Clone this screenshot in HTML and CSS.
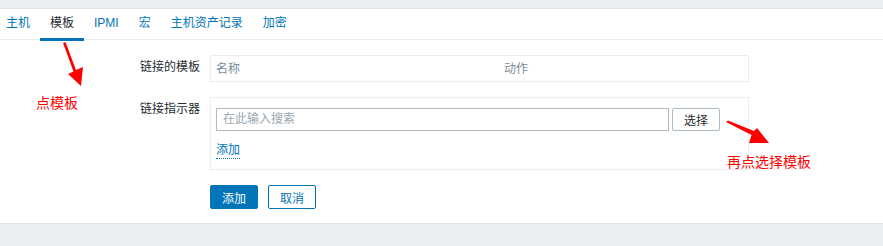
FILE: index.html
```html
<!DOCTYPE html>
<html lang="zh">
<head>
<meta charset="utf-8">
<link rel="stylesheet" href="styles.css">
</head>
<body>
<div class="topbar"></div>
<div class="panel">
  <ul class="tabs">
    <li class="tab first">主机</li>
    <li class="tab active">模板</li>
    <li class="tab">IPMI</li>
    <li class="tab">宏</li>
    <li class="tab">主机资产记录</li>
    <li class="tab">加密</li>
  </ul>
  <div class="form">
    <div class="row">
      <div class="label">链接的模板</div>
      <div class="box table">
        <div class="th th-name">名称</div>
        <div class="th">动作</div>
      </div>
    </div>
    <div class="row">
      <div class="label">链接指示器</div>
      <div class="box picker">
        <div class="search">
          <div class="input">在此输入搜索</div>
          <button class="btn-grey">选择</button>
        </div>
        <span class="link">添加</span>
      </div>
    </div>
    <div class="actions">
      <button class="btn-primary">添加</button>
      <button class="btn-alt">取消</button>
    </div>
  </div>
  <div class="note note1">点模板</div>
  <div class="note note2">再点选择模板</div>
  <svg class="arrows" width="883" height="214" viewBox="0 9 883 214">
    <polygon points="63,43 65.5,42 76,70 83,67 81,86 68,74 73.5,71.5" fill="#ff0000"/>
    <polygon points="726,122 728,120.5 754,131 757,128 769,143 749,143 751.5,135" fill="#ff0000"/>
  </svg>
</div>
<div class="footer"></div>
</body>
</html>
```

FILE: styles.css
```css
* { box-sizing: border-box; }
html, body {
  margin: 0;
  padding: 0;
  background: #ffffff;
  font-family: "Liberation Sans", "Noto Sans CJK SC", sans-serif;
  font-size: 12px;
  color: #1f2c33;
}
.topbar {
  height: 9px;
  background: #ebeef0;
  border-bottom: 1px solid #dfe4e7;
}
.panel {
  position: relative;
  height: 214px;
  background: #ffffff;
}
.tabs {
  list-style: none;
  margin: 0 0 0 -4px;
  padding: 0;
  display: flex;
  height: 31px;
  border-bottom: 1px solid #ebeef0;
}
.tab {
  position: relative;
  padding: 0 10px;
  height: 30px;
  line-height: 29px;
  color: #0275b8;
}
.tab.active { color: #1f2c33; }
.tab.active::after {
  content: "";
  position: absolute;
  left: 0;
  right: 0;
  bottom: -2px;
  height: 3px;
  background: #0275b8;
}
.form {
  padding: 15px 0 0 0;
  display: flex;
  flex-direction: column;
  gap: 15px;
}
.row {
  display: flex;
  gap: 10px;
}
.label {
  width: 200px;
  text-align: right;
  padding-top: 5px;
  line-height: 14px;
}
.box {
  width: 539px;
  border: 1px solid #ebeef0;
}
.table {
  height: 27px;
  display: flex;
  align-items: center;
  padding-left: 5px;
}
.th {
  color: #768d99;
  line-height: 14px;
}
.th-name { width: 288px; }
.picker {
  padding: 10px 5px 10px 5px;
}
.search {
  display: flex;
  gap: 3px;
}
.input {
  width: 453px;
  height: 23px;
  border: 1px solid #acbbc5;
  padding: 0 6px;
  line-height: 21px;
  color: #9aa7b0;
}
.btn-grey {
  width: 48px;
  height: 23px;
  border: 1px solid #acbbc5;
  background: #ffffff;
  border-radius: 2px;
  font: inherit;
  color: #1f2c33;
  padding: 0;
}
.link {
  display: inline-block;
  margin-top: 12px;
  line-height: 14px;
  padding-bottom: 1px;
  color: #0275b8;
  border-bottom: 1px dotted #0275b8;
}
.actions {
  display: flex;
  gap: 10px;
  padding-left: 210px;
}
.actions button {
  width: 48px;
  height: 24px;
  border-radius: 2px;
  font: inherit;
  padding: 0;
}
.btn-primary {
  background: #0275b8;
  border: 1px solid #0275b8;
  color: #ffffff;
}
.btn-alt {
  background: #ffffff;
  border: 1px solid #0275b8;
  color: #0275b8;
}
.note {
  position: absolute;
  color: #ff0000;
  font-size: 14px;
  line-height: 16px;
}
.note1 { left: 36px; top: 86px; }
.note2 { left: 727px; top: 145px; }
.arrows {
  position: absolute;
  left: 0;
  top: 0;
  pointer-events: none;
}
.footer {
  height: 23px;
  background: #ebeef0;
  border-top: 1px solid #dfe4e7;
}
```
